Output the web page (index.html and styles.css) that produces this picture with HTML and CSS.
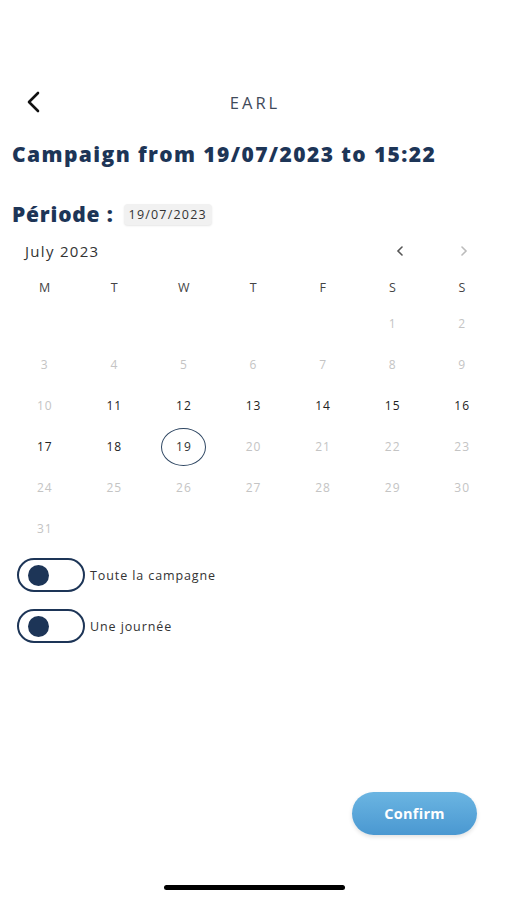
FILE: index.html
```html
<!DOCTYPE html>
<html lang="en">
<head>
  <meta charset="UTF-8">
  <title>EARL</title>
  <meta name="viewport" content="width=device-width, initial-scale=1.0">
  <link rel="stylesheet" href="styles.css">
</head>
<body>

<div class="screen">
  <div class="topbar">
    <span class="back">
      <svg width="16" height="22" viewBox="0 0 16 22"><path d="M13 2 L4 11 L13 20" fill="none" stroke="#111" stroke-width="2.6" stroke-linecap="round" stroke-linejoin="round"/></svg>
    </span>
    <span class="topbar-title">EARL</span>
  </div>

  <h1 class="title">Campaign from 19/07/2023 to 15:22</h1>

  <div class="period">
    <span class="period-label">Période :</span>
    <span class="date-chip">19/07/2023</span>
  </div>

  <div class="calendar">
    <div class="cal-head">
      <span class="month">July 2023</span>
      <span class="nav">
        <svg width="8" height="12" viewBox="0 0 8 12"><path d="M6 2 L2 6 L6 10" fill="none" stroke="#555" stroke-width="1.6" stroke-linecap="round"/></svg>
        <svg width="8" height="12" viewBox="0 0 8 12"><path d="M2 2 L6 6 L2 10" fill="none" stroke="#bbb" stroke-width="1.6" stroke-linecap="round"/></svg>
      </span>
    </div>
    <div class="grid" id="grid">
      <span class="dow">M</span><span class="dow">T</span><span class="dow">W</span><span class="dow">T</span><span class="dow">F</span><span class="dow">S</span><span class="dow">S</span>
    </div>
  </div>

  <div class="toggles">
    <label class="toggle-row"><span class="toggle"><span class="knob"></span></span>Toute la campagne</label>
    <label class="toggle-row"><span class="toggle"><span class="knob"></span></span>Une journée</label>
  </div>

  <div class="footer">
    <button class="confirm">Confirm</button>
  </div>
  <div class="home-bar"></div>
</div>

<script>
  const grid = document.getElementById('grid');
  const active = [11, 12, 13, 14, 15, 16, 17, 18];
  for (let i = 0; i < 5; i++) {
    grid.appendChild(document.createElement('span'));
  }
  for (let d = 1; d <= 31; d++) {
    const cell = document.createElement('span');
    cell.className = 'day';
    if (active.includes(d)) cell.className += ' on';
    if (d === 19) cell.className += ' selected';
    cell.textContent = d;
    grid.appendChild(cell);
  }
</script>

</body>
</html>
```

FILE: styles.css
```css
body {
  margin: 0;
  background: #fff;
  font-family: 'Open Sans', sans-serif;
  color: #333;
}
.screen {
  width: 507px;
  height: 900px;
  position: relative;
  overflow: hidden;
}
.topbar {
  height: 44px;
  margin-top: 80px;
  display: flex;
  align-items: center;
  justify-content: center;
  position: relative;
}
.back {
  position: absolute;
  left: 25px;
  top: 11px;
}
.topbar-title {
  font-size: 16.5px;
  letter-spacing: 3px;
  margin-left: 3px;
  color: #3f4a5a;
}
.title {
  margin: 16px 0 0 12px;
  font-size: 21px;
  font-weight: 800;
  color: #1d3557;
  letter-spacing: 1.4px;
}
.period {
  margin: 32px 0 0 12px;
  display: flex;
  align-items: center;
  gap: 10px;
}
.period-label {
  font-size: 21px;
  font-weight: 800;
  color: #1d3557;
  letter-spacing: 0.8px;
}
.date-chip {
  background: #f1f1f1;
  border-radius: 4px;
  padding: 2px 5px;
  font-size: 12.5px;
  color: #333;
  letter-spacing: 1.2px;
  box-shadow: 0 1px 2px rgba(0,0,0,0.1);
}
.calendar {
  margin: 10px 10px 0 10px;
}
.cal-head {
  display: flex;
  justify-content: space-between;
  align-items: center;
  height: 26px;
  padding-left: 15px;
}
.month {
  font-size: 15px;
  letter-spacing: 1.3px;
  color: #333;
}
.nav {
  display: flex;
  gap: 56px;
  padding-right: 29px;
}
.grid {
  display: grid;
  grid-template-columns: repeat(7, 1fr);
  grid-auto-rows: 41px;
  margin-top: -2px;
}
.grid span {
  display: flex;
  align-items: center;
  justify-content: center;
}
.dow {
  font-size: 12.5px;
  color: #444;
  height: 28px;
  margin-top: 11px;
  letter-spacing: 0.5px;
}
.day {
  font-size: 12px;
  color: #c4c4c4;
  letter-spacing: 1px;
}
.day.on {
  color: #222;
}
.day.selected {
  color: #333;
  width: 43px;
  height: 36px;
  margin: auto;
  border: 1.5px solid #2e4662;
  border-radius: 50%;
}
.toggles {
  margin: 9px 0 0 17px;
  display: flex;
  flex-direction: column;
  gap: 17px;
}
.toggle-row {
  display: flex;
  align-items: center;
  gap: 5px;
  font-size: 12.5px;
  color: #333;
  letter-spacing: 0.9px;
}
.toggle {
  width: 55px;
  height: 30px;
  border: 2px solid #1d3557;
  border-radius: 17px;
  display: flex;
  align-items: center;
  padding-left: 9px;
}
.knob {
  width: 21px;
  height: 21px;
  border-radius: 50%;
  background: #1d3557;
}
.footer {
  position: absolute;
  right: 30px;
  top: 792px;
}
.confirm {
  width: 125px;
  height: 43px;
  border: none;
  border-radius: 22px;
  background: linear-gradient(#6bb5e2, #4a98d1);
  color: #fff;
  font-family: 'Open Sans', sans-serif;
  font-weight: 700;
  font-size: 14.5px;
  letter-spacing: 0.3px;
  box-shadow: 0 2px 4px rgba(0,0,0,0.12);
}
.home-bar {
  position: absolute;
  left: 164px;
  top: 885px;
  width: 181px;
  height: 5px;
  border-radius: 3px;
  background: #000;
}
```
